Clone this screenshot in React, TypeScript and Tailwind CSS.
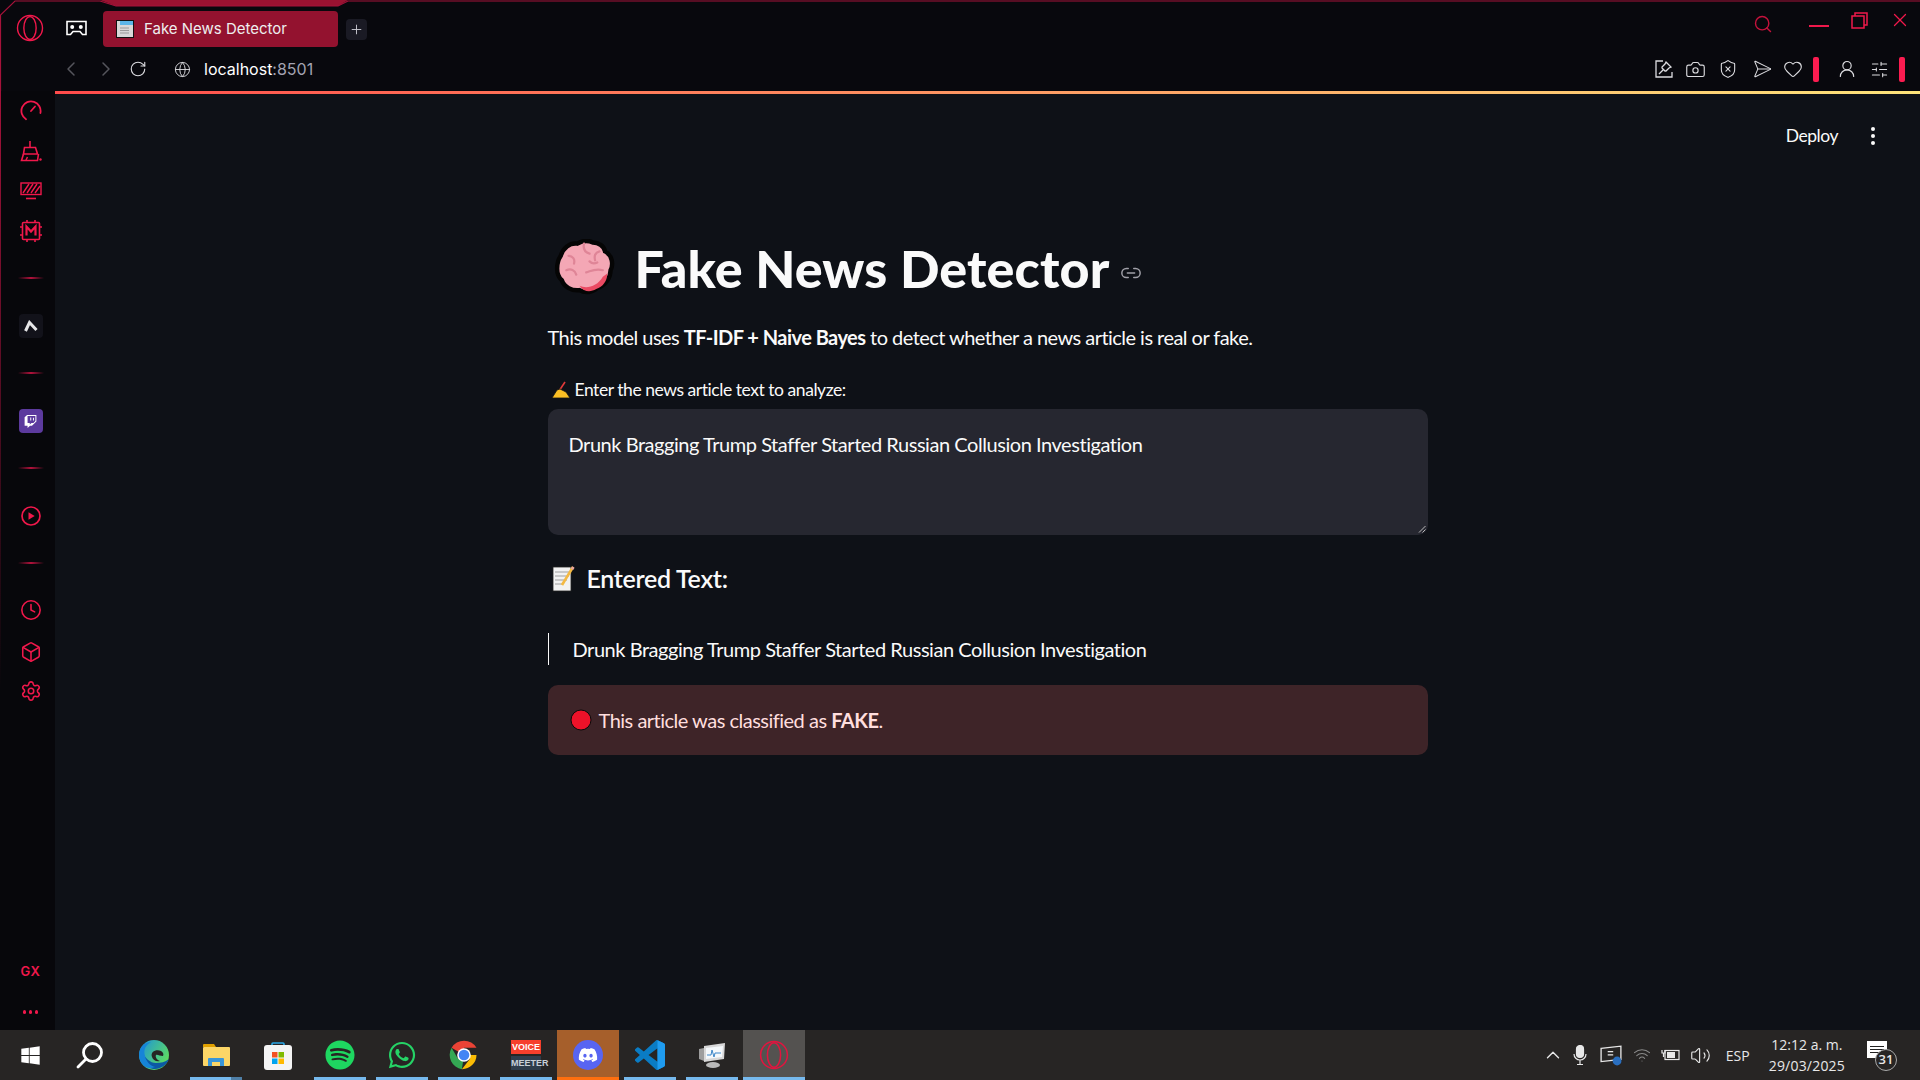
import React from "react";
import { FaDiscord, FaSpotify, FaTwitch, FaWhatsapp, FaWindows } from "react-icons/fa";
import {
  Camera,
  ChevronLeft,
  ChevronRight,
  ChevronUp,
  Clock,
  Box,
  Globe,
  Heart,
  Link2,
  Plus,
  RotateCw,
  Search,
  Send,
  Settings,
  ShieldX,
  SlidersHorizontal,
  UserRound,
  X,
  Volume2,
  Wifi,
} from "lucide-react";

const RED = "#f0184b";

function OperaLogo({ size = 30, color = RED }: { size?: number; color?: string }) {
  return (
    <svg width={size} height={size} viewBox="0 0 30 30" fill="none" stroke={color} strokeWidth="1.5">
      <circle cx="15" cy="15" r="13.4" />
      <ellipse cx="15" cy="15" rx="6.6" ry="12.2" />
    </svg>
  );
}

function Divider() {
  return <div className="h-[2px] w-[26px] bg-[linear-gradient(90deg,transparent,#b3123c,transparent)]" />;
}

function Slot({ h, children }: { h: string; children: React.ReactNode }) {
  return <div className={`flex w-full items-center justify-center ${h}`}>{children}</div>;
}

function Sidebar() {
  return (
    <aside className="relative flex w-[55px] shrink-0 flex-col items-center bg-[#07070b] pl-[6px] text-[#f0184b]">
      <div className="absolute left-0 top-0 h-[600px] w-[1px] bg-[linear-gradient(180deg,#a5123a,transparent)]" />
      <Slot h="h-[40px]">
        <svg width="22" height="22" viewBox="0 0 22 22" fill="none" stroke={RED} strokeWidth="1.8" strokeLinecap="round">
          <path d="M6 19.2A9.6 9.6 0 1 1 20.4 13" />
          <path d="M11 11l4-4.5" />
        </svg>
      </Slot>
      <Slot h="h-[40px]">
        <svg width="24" height="22" viewBox="0 0 24 22" fill="none" stroke={RED} strokeWidth="1.6">
          <path d="M11 1v6" />
          <path d="M5.5 7.5h11l2 6.5h-14z" />
          <path d="M4.5 14l-2 6.5h16l1-6.5" />
          <path d="M7 20l1.5-3" />
          <circle cx="21.5" cy="19.5" r="1.2" fill={RED} stroke="none" />
        </svg>
      </Slot>
      <Slot h="h-[40px]">
        <svg width="22" height="18" viewBox="0 0 22 18" fill="none" stroke={RED} strokeWidth="1.4">
          <rect x="1" y="1" width="20" height="11.5" />
          <path d="M3 11l6-9M7 11l6-9M11 11l6-9M15 11l5-7" />
          <path d="M6 16.5h10" strokeWidth="1.6" />
        </svg>
      </Slot>
      <Slot h="h-[40px]">
        <svg width="24" height="24" viewBox="0 0 24 24" fill="none" stroke={RED} strokeWidth="1.6">
          <rect x="3.5" y="3.5" width="17" height="17" rx="1" />
          <path d="M8 1v2.5M16 1v2.5M8 20.5V23M16 20.5V23M1 8h2.5M1 16h2.5M20.5 8H23M20.5 16H23" />
          <path d="M7.5 16.5v-9l4.5 5 4.5-5v9" strokeWidth="2.2" />
        </svg>
      </Slot>
      <Slot h="h-[54px]">
        <Divider />
      </Slot>
      <Slot h="h-[42px]">
        <div className="flex h-[24px] w-[24px] items-center justify-center rounded-[4px] bg-[#12121a]">
          <svg width="14" height="12" viewBox="0 0 14 12" fill="none" stroke="#e6e6e8" strokeWidth="3">
            <path d="M1.5 11l4-8.5L12.5 10" />
          </svg>
        </div>
      </Slot>
      <Slot h="h-[52px]">
        <Divider />
      </Slot>
      <Slot h="h-[44px]">
        <div className="flex h-[24px] w-[24px] items-center justify-center rounded-[4px] bg-[#5c3a9e]">
          <FaTwitch className="text-[13px] text-white" />
        </div>
      </Slot>
      <Slot h="h-[50px]">
        <Divider />
      </Slot>
      <Slot h="h-[46px]">
        <svg width="20" height="20" viewBox="0 0 20 20" fill="none" stroke={RED} strokeWidth="1.7">
          <circle cx="10" cy="10" r="9" />
          <path d="M7.5 6.2l6.2 3.8-6.2 3.8z" fill={RED} stroke="none" />
        </svg>
      </Slot>
      <Slot h="h-[48px]">
        <Divider />
      </Slot>
      <Slot h="h-[46px]">
        <Clock size={22} strokeWidth={1.7} />
      </Slot>
      <Slot h="h-[38px]">
        <Box size={22} strokeWidth={1.7} />
      </Slot>
      <Slot h="h-[40px]">
        <Settings size={22} strokeWidth={1.7} />
      </Slot>
      <div className="mt-auto mb-[2px] flex h-[40px] items-center font-['Inter',sans-serif] text-[13px] font-semibold tracking-[0.5px]">
        GX
      </div>
      <Slot h="h-[36px]">
        <div className="flex gap-[2.5px]">
          <span className="h-[3.5px] w-[3.5px] rounded-full bg-[#f0184b]" />
          <span className="h-[3.5px] w-[3.5px] rounded-full bg-[#f0184b]" />
          <span className="h-[3.5px] w-[3.5px] rounded-full bg-[#f0184b]" />
        </div>
      </Slot>
    </aside>
  );
}

function TopBar() {
  return (
    <header className="relative h-[91px] shrink-0 bg-[#08080d]">
      {/* gx frame along the top edge */}
      <svg className="absolute left-0 top-0" width="1920" height="91" viewBox="0 0 1920 91" fill="none">
        <path d="M100 0l16 6h222l10-6z" fill="#9a1231" />
        <path d="M0.5 91V15L15 1h85l16 5h222l10-5h1572" stroke="#a5123a" strokeWidth="1.2" />
      </svg>
      <div className="flex h-[51px] items-center pt-[5px]">
        <div className="flex w-[60px] justify-center">
          <OperaLogo size={28} />
        </div>
        <div className="flex w-[32px] justify-center">
          <svg width="21" height="16" viewBox="0 0 21 16" fill="none">
            <path d="M1 1.5h19v13h-3.5l-2.5-3H7l-2.5 3H1z" stroke="#fff" strokeWidth="1.6" />
            <circle cx="6.2" cy="7" r="2" fill="#fff" />
            <circle cx="14.8" cy="7" r="2" fill="#fff" />
          </svg>
        </div>
        <div className="ml-[11px] mt-[2px] flex h-[36px] w-[235px] items-center rounded-[4px] bg-[#93122f] pl-[13px] font-['Inter',sans-serif] text-[15px] text-[#eee]">
          <svg width="18" height="18" viewBox="0 0 18 18" className="mr-[10px]">
            <rect x="0.5" y="0.5" width="17" height="17" fill="#d8d8d8" stroke="#111" />
            <rect x="4" y="1" width="13" height="4" fill="#5cb6e8" />
            <path d="M4 8h9M4 10.5h9M4 13h9" stroke="#9a9a9a" />
          </svg>
          Fake News Detector
        </div>
        <div className="ml-[8px] mt-[2px] flex h-[21px] w-[21px] items-center justify-center rounded-[4px] bg-[#1a1a24] text-[#c9c9d0]">
          <Plus size={15} strokeWidth={1.5} />
        </div>
        <div className="ml-auto flex items-center text-[#e0153f]">
          <Search size={20} strokeWidth={1.7} className="mr-[36px] -mt-[8px] text-[#c5123c]" />
          <div className="mr-[22px] -mt-[4px] h-[2px] w-[20px] bg-[#f0184b]" />
          <svg width="17" height="17" viewBox="0 0 17 17" fill="none" stroke={RED} strokeWidth="1.5" className="mr-[21px] -mt-[15px]">
            <rect x="1" y="4" width="12" height="12" />
            <path d="M4 4V1h12v12h-3" />
          </svg>
          <X size={22} strokeWidth={1.4} className="mr-[9px] -mt-[17px] text-[#f0184b]" />
        </div>
      </div>
      <div className="flex h-[36px] items-center pl-[59px] text-[#dcdce0]">
        <ChevronLeft size={24} strokeWidth={1.5} className="text-[#55555c]" />
        <ChevronRight size={24} strokeWidth={1.5} className="ml-[11px] text-[#55555c]" />
        <RotateCw size={18} strokeWidth={1.5} className="ml-[11px]" />
        <Globe size={17} strokeWidth={1.3} className="ml-[27px]" />
        <span className="ml-[13px] font-['Inter',sans-serif] text-[16px] text-white">
          localhost<span className="text-[#a3a3b2]">:8501</span>
        </span>
        <div className="ml-auto flex items-center">
          <svg width="18" height="18" viewBox="0 0 18 18" fill="none" stroke="#dcdce0" strokeWidth="1.3" className="mr-[12px]">
            <path d="M8 1H1v16h16v-5" />
            <path d="M11 2l5 5-2 1-3 3-1 0-3-3 0-1 3-3zM4 14l4-4" />
          </svg>
          <Camera size={21} strokeWidth={1.3} className="mr-[12px]" />
          <ShieldX size={20} strokeWidth={1.3} className="mr-[11px]" />
          <Send size={20} strokeWidth={1.2} className="mr-[14px] rotate-45" />
          <Heart size={20} strokeWidth={1.3} className="mr-[10px]" />
          <div className="mr-[18px] h-[25px] w-[6px] rounded-[2px] bg-[#fb1c50]" />
          <UserRound size={20} strokeWidth={1.4} className="mr-[13px]" />
          <SlidersHorizontal size={19} strokeWidth={1.3} className="mr-[10px]" />
          <div className="mr-[15px] h-[25px] w-[6px] rounded-[2px] bg-[#fb1c50]" />
        </div>
      </div>
    </header>
  );
}

function BrainEmoji() {
  return (
    <svg width="62" height="58" viewBox="0 0 56 52" className="shrink-0">
      <path
        d="M7 15C9 8 15 3 22 4c5-3 10-3 14-1 5 0 10 3 11 8 6 3 8 11 5 17 0 7-5 14-12 16-4 4-11 5-16 2-7 1-14-3-16-9C2 32 3 21 7 15z"
        fill="#f4a7b5"
        stroke="#050505"
        strokeWidth="4"
      />
      <path d="M24 42c6 3 16 1 21-8l4-3c0 7-4 12-10 14-5 3-11 3-15-3z" fill="#ea4a63" />
      <path
        d="M14 15c4 0 6 3 5 7M28 4c-1 5 1 8 5 9M42 11c-4 1-5 4-4 8M12 28c4-2 8 0 9 4M30 30c4-1 8-4 15-2M33 20c2 2 5 2 7 1"
        fill="none"
        stroke="#df8597"
        strokeWidth="2"
        strokeLinecap="round"
      />
    </svg>
  );
}

function WritingHand() {
  return (
    <svg width="20" height="18" viewBox="0 0 20 18" className="shrink-0">
      <path d="M14 1L8 10" stroke="#e23a3a" strokeWidth="1.6" />
      <path d="M6 9l3-1 6 3 4 6H1z" fill="#fbbf24" stroke="#141414" strokeWidth="0.8" />
    </svg>
  );
}

function MemoEmoji() {
  return (
    <svg width="24" height="26" viewBox="0 0 24 26" className="shrink-0">
      <rect x="2" y="1" width="18" height="24" fill="#f2f2f2" stroke="#222" strokeWidth="0.8" />
      <path d="M4 6h14M4 10h14M4 14h12M4 18h8" stroke="#9d9d9d" strokeWidth="1.2" />
      <path d="M22 1L11 19" stroke="#f4b942" strokeWidth="2.6" />
      <path d="M22.5 1l-1.4 2.2" stroke="#e9a7a0" strokeWidth="2.6" />
    </svg>
  );
}

function Main() {
  return (
    <main className="flex min-w-0 flex-1 flex-col bg-[#0e1117] font-['Lato',sans-serif] tracking-[-0.45px] text-[#fafafa]">
      <div className="h-[3px] bg-[linear-gradient(90deg,#ff4b4b,#fde47a)]" />
      <div className="flex h-[84px] items-center justify-end text-[17.5px]">
        <span className="mr-[33px]">Deploy</span>
        <div className="mr-[45px] flex flex-col gap-[3px]">
          <span className="h-[4px] w-[4px] rounded-full bg-[#fafafa]" />
          <span className="h-[4px] w-[4px] rounded-full bg-[#fafafa]" />
          <span className="h-[4px] w-[4px] rounded-full bg-[#fafafa]" />
        </div>
      </div>
      <section className="mx-auto w-[880px]">
        <div className="mt-[59px] flex h-[62px] items-center pl-[5px]">
          <BrainEmoji />
          <h1 className="ml-[20px] text-[52px] leading-[62px] font-black tracking-[0.15px]">Fake News Detector</h1>
          <Link2 size={22} strokeWidth={1.6} className="ml-[11px] mt-[10px] text-[#a0a0a8]" />
        </div>
        <p className="mt-[23px] text-[20px] leading-[30px] tracking-[-0.54px]">
          This model uses <b>TF-IDF + Naive Bayes</b> to detect whether a news article is real or fake.
        </p>
        <label className="mt-[28px] flex h-[20px] items-center pl-[3px] text-[17.5px]">
          <WritingHand />
          <span className="ml-[4px]">Enter the news article text to analyze:</span>
        </label>
        <div className="relative mt-[9px] h-[126px] rounded-[10px] bg-[#262730] px-[21px] pt-[20px] text-[20px] leading-[30px]">
          Drunk Bragging Trump Staffer Started Russian Collusion Investigation
          <svg className="absolute bottom-[2px] right-[2px]" width="8" height="8" viewBox="0 0 8 8" stroke="#bbb" strokeWidth="1">
            <path d="M7.5 1L1 7.5M7.5 4.5L4.5 7.5" />
          </svg>
        </div>
        <div className="mt-[26px] flex h-[36px] items-center pl-[3px]">
          <MemoEmoji />
          <h3 className="ml-[12px] text-[25px] font-semibold tracking-[-0.3px]">Entered Text:</h3>
        </div>
        <blockquote className="mt-[36px] h-[32px] border-l border-[#fafafa] pl-[24px] text-[20px] leading-[32px]">
          Drunk Bragging Trump Staffer Started Russian Collusion Investigation
        </blockquote>
        <div className="mt-[20px] flex h-[70px] items-center rounded-[10px] bg-[#3e2428] pl-[22px] text-[20px] tracking-[-0.5px] text-[#ffdede]">
          <svg width="22" height="22" viewBox="0 0 22 22" className="shrink-0">
            <circle cx="11" cy="11" r="10" fill="#ed1229" stroke="#0a0a0a" />
          </svg>
          <span className="ml-[7px]">
            This article was classified as <b>FAKE</b>.
          </span>
        </div>
      </section>
    </main>
  );
}

function Cell({
  children,
  line = "",
  bg = "",
}: {
  children: React.ReactNode;
  line?: string;
  bg?: string;
}) {
  return (
    <div className={`relative flex h-full w-[62px] items-center justify-center ${bg}`}>
      {children}
      {line && <div className={`absolute bottom-0 left-[5px] right-[5px] h-[3px] ${line}`} />}
    </div>
  );
}

function Taskbar() {
  return (
    <footer className="flex h-[50px] shrink-0 items-center bg-[#272524] font-['Open_Sans',sans-serif] text-[#e8e8e8]">
      <div className="flex h-full w-[60px] items-center justify-center">
        <FaWindows className="text-[21px] text-white" />
      </div>
      <div className="flex h-full w-[63px] items-center justify-center">
        <svg width="28" height="28" viewBox="0 0 28 28" fill="none" stroke="#fff" strokeWidth="2.8" className="mr-[3px]">
          <circle cx="16.5" cy="11.5" r="9" />
          <path d="M10 18l-8 8" strokeLinecap="round" />
        </svg>
      </div>
      <Cell>
        <svg width="32" height="32" viewBox="0 0 32 32">
          <defs>
            <linearGradient id="edgeA" x1="0" y1="0" x2="1" y2="0.6">
              <stop offset="0" stopColor="#1a8fe0" />
              <stop offset="1" stopColor="#5ddc60" />
            </linearGradient>
          </defs>
          <circle cx="16" cy="16" r="15" fill="url(#edgeA)" />
          <path d="M31 20c-3 8-13 13-21 8C5 25 2 18 4 13c3 6 8 11 14 11 5 0 9-1 13-4z" fill="#0c59a4" />
          <path d="M1 16C1 8 7 3 13 3c-5 3-8 7-6 14 1 6 6 10 10 11C8 32 1 24 1 16z" fill="#1684d8" />
          <path d="M14 18c-2-5 4-8 9-6 2 1 3 3 2 5-3 0-6-2-7-1-1 2 1 5 4 6-4 1-7-1-8-4z" fill="#272524" />
        </svg>
      </Cell>
      <Cell line="bg-[linear-gradient(90deg,#76b9ed_78%,#4f7fa6_78%)]">
        <svg width="28" height="24" viewBox="0 0 28 24">
          <path d="M1 2a1 1 0 0 1 1-1h10l2 3H1z" fill="#e0a000" />
          <rect x="1" y="4" width="27" height="19" rx="1" fill="#fcd667" />
          <path d="M6 23v-7a1 1 0 0 1 1-1h14a1 1 0 0 1 1 1v7h-4v-4H10v4z" fill="#3a96d8" />
        </svg>
      </Cell>
      <Cell>
        <svg width="30" height="30" viewBox="0 0 30 30">
          <path d="M9 7V4a1 1 0 0 1 1-1h10a1 1 0 0 1 1 1v3" fill="none" stroke="#2aa8e8" strokeWidth="1.6" />
          <rect x="1" y="5" width="28" height="25" rx="3" fill="#f4f4f4" />
          <rect x="9" y="12" width="5.5" height="5.5" fill="#f25022" />
          <rect x="15.5" y="12" width="5.5" height="5.5" fill="#7fba00" />
          <rect x="9" y="18.5" width="5.5" height="5.5" fill="#00a4ef" />
          <rect x="15.5" y="18.5" width="5.5" height="5.5" fill="#ffb900" />
        </svg>
      </Cell>
      <Cell line="bg-[#76b9ed]">
        <FaSpotify className="text-[30px] text-[#1ed760]" />
      </Cell>
      <Cell line="bg-[#76b9ed]">
        <FaWhatsapp className="text-[30px] text-[#25d366]" />
      </Cell>
      <Cell line="bg-[#76b9ed]">
        <svg width="30" height="30" viewBox="0 0 30 30">
          <path d="M15 15L2.6 7.8A14.4 14.4 0 0 1 27.5 7.8H15z" fill="#ea4335" />
          <path d="M15 15l-6.2 3.6L2.6 7.8A14.4 14.4 0 0 0 12.9 29.2z" fill="#34a853" />
          <path d="M15 15h12.5A14.4 14.4 0 0 1 12.9 29.2L21.2 18.6z" fill="#fbbc05" />
          <circle cx="15" cy="15" r="6.8" fill="#fff" />
          <circle cx="15" cy="15" r="5.3" fill="#4285f4" />
        </svg>
      </Cell>
      <Cell line="bg-[#76b9ed]">
        <div className="flex h-[30px] w-[30px] flex-col text-center font-['Liberation_Sans',sans-serif] text-[9px] font-bold leading-[14px]">
          <div className="h-[14px] bg-[#f63f2c] text-white">VOICE</div>
          <div className="mt-[2px] h-[14px] bg-[#2f3d4c] text-[#c8d0d8]">MEETER</div>
        </div>
      </Cell>
      <Cell bg="bg-[#a65f2b]" line="!left-0 !right-0 bg-[#ff6f0f]">
        <div className="flex h-[30px] w-[30px] items-center justify-center rounded-full bg-[#5865f2]">
          <FaDiscord className="text-[20px] text-white" />
        </div>
      </Cell>
      <Cell line="bg-[#76b9ed]">
        <svg width="30" height="30" viewBox="0 0 24 24">
          <path
            d="M23.15 2.587L18.21.21a1.494 1.494 0 0 0-1.705.29l-9.46 8.63-4.12-3.128a.999.999 0 0 0-1.276.057L.327 7.261A1 1 0 0 0 .326 8.74L3.899 12 .326 15.26a1 1 0 0 0 .001 1.479L1.65 17.94a.999.999 0 0 0 1.276.057l4.12-3.128 9.46 8.63a1.492 1.492 0 0 0 1.704.29l4.942-2.377A1.5 1.5 0 0 0 24 20.06V3.939a1.5 1.5 0 0 0-.85-1.352zm-5.146 14.861L10.826 12l7.178-5.448v10.896z"
            fill="#0a7cc4"
          />
          <path d="M18 0.1l5.15 2.49A1.5 1.5 0 0 1 24 3.94v16.12a1.5 1.5 0 0 1-.85 1.35L18 23.9z" fill="#1f9cf0" />
        </svg>
      </Cell>
      <Cell line="bg-[#76b9ed]">
        <svg width="28" height="28" viewBox="0 0 28 28">
          <path d="M6 5l21-3-1 16-20 3z" fill="#d8d8d8" />
          <path d="M8 7l17-2-1 11-16 2z" fill="#f4f8fb" />
          <path d="M9 14h4l1-5 2 7 1-4h6" fill="none" stroke="#3c86c8" strokeWidth="1" />
          <ellipse cx="15" cy="24" rx="7" ry="3" fill="#b9b9b9" />
          <path d="M1 8l5-1v13l-5-2z" fill="#9d9d9d" />
        </svg>
      </Cell>
      <Cell bg="bg-[#545250]" line="!left-0 !right-0 bg-[#76b9ed]">
        <OperaLogo size={30} color="#e0153f" />
      </Cell>
      <div className="ml-auto flex h-full items-center pr-[20px]">
        <ChevronUp size={22} strokeWidth={1.5} className="mr-[9px]" />
        <svg width="14" height="20" viewBox="0 0 14 20" fill="none" stroke="#e8e8e8" strokeWidth="1.2" className="mr-[12px]">
          <rect x="3.5" y="0.5" width="7" height="12" rx="3.5" fill="#e8e8e8" />
          <path d="M1 9a6 6 0 0 0 12 0M7 15v4M4 19.5h6" />
        </svg>
        <svg width="22" height="21" viewBox="0 0 20 19" fill="none" stroke="#e8e8e8" strokeWidth="1.2" className="relative mr-[11px] ml-[1px]">
          <path d="M1 3l18-2v12l-18 2z" />
          <path d="M7 6h5M7 9h5" />
          <circle cx="15.5" cy="14.5" r="4" fill="#2a6fc0" stroke="none" />
        </svg>
        <Wifi size={18} strokeWidth={1.4} className="mr-[10px] text-[#8a8a8a]" />
        <svg width="20" height="12" viewBox="0 0 20 12" fill="none" stroke="#e8e8e8" strokeWidth="1.2" className="mr-[9px]">
          <rect x="4" y="1.5" width="14" height="9" />
          <rect x="6" y="3" width="8" height="6" fill="#e8e8e8" stroke="none" />
          <path d="M1 1v3h3V1M2.5 4v4" />
        </svg>
        <Volume2 size={21} strokeWidth={1.3} className="mr-[15px]" />
        <span className="mr-[19px] text-[14px]">ESP</span>
        <div className="mr-[22px] flex flex-col items-center text-[14px] leading-[21px]">
          <span>12:12 a. m.</span>
          <span className="tracking-[0.2px]">29/03/2025</span>
        </div>
        <div className="relative mr-[3px] h-[30px] w-[30px]">
          <div className="absolute left-0 top-[1px] flex h-[17px] w-[20px] flex-col justify-center gap-[2px] bg-white px-[3px]">
            <span className="h-[1px] bg-[#222]" />
            <span className="h-[1px] bg-[#222]" />
            <span className="h-[1px] bg-[#222]" />
          </div>
          <div className="absolute left-[8px] top-[9px] flex h-[22px] w-[22px] items-center justify-center rounded-full border border-[#aaa] bg-[#272524] text-[13px] font-semibold">
            31
          </div>
        </div>
      </div>
    </footer>
  );
}

export default function App() {
  return (
    <div className="flex h-screen w-[1920px] flex-col overflow-hidden bg-[#08080d]">
      <TopBar />
      <div className="flex min-h-0 flex-1">
        <Sidebar />
        <Main />
      </div>
      <Taskbar />
    </div>
  );
}
